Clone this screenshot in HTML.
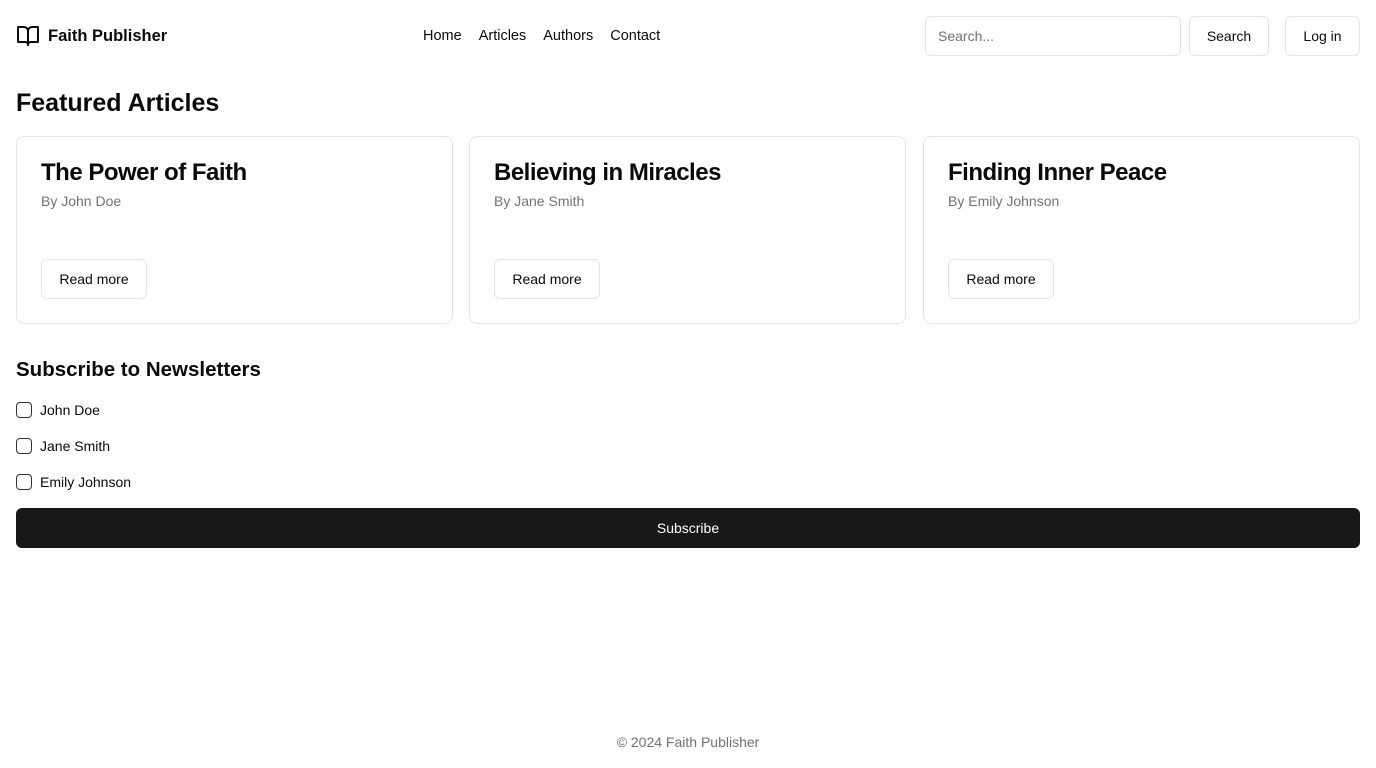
<!DOCTYPE html>
<html><head><meta charset="utf-8"><style>
*{box-sizing:border-box;margin:0;padding:0}
body{width:1376px;height:768px;position:relative;font-family:"Liberation Sans",sans-serif;color:#0a0a0a;background:#fff;overflow:hidden}
.abs{position:absolute}
.btn{position:absolute;border:1px solid #e4e4e7;border-radius:6px;background:#fff;font-size:14px;display:flex;align-items:center;justify-content:center;color:#0a0a0a}
.card{position:absolute;top:136px;width:437px;height:188px;border:1px solid #e4e4e7;border-radius:8px}
.card h3{position:absolute;left:24px;top:22px;font-size:24px;font-weight:600;letter-spacing:-0.5px}
.card p{position:absolute;left:24px;top:56px;font-size:14px;color:#71717a}
.card .btn{left:24px;top:122px;width:106px;height:40px}
.cb{position:absolute;left:16px;width:16px;height:16px;border:1.5px solid #333;border-radius:4px}
.lbl{position:absolute;left:40px;font-size:14px}
</style></head><body>
<svg class="abs" style="left:16px;top:24px" width="24" height="24" viewBox="0 0 24 24" fill="none" stroke="#0a0a0a" stroke-width="2" stroke-linecap="round" stroke-linejoin="round"><path d="M2 3h6a4 4 0 0 1 4 4v14a3 3 0 0 0-3-3H2z"/><path d="M22 3h-6a4 4 0 0 0-4 4v14a3 3 0 0 1 3-3h7z"/></svg>
<div class="abs" style="left:48px;top:27px;font-size:16.5px;font-weight:700">Faith Publisher</div>
<div class="abs" style="left:423px;top:28px;font-size:14.5px"><span>Home</span><span style="margin-left:17px">Articles</span><span style="margin-left:17px">Authors</span><span style="margin-left:17px">Contact</span></div>
<div class="btn" style="left:925px;top:16px;width:256px;height:40px;justify-content:flex-start;padding-left:12px;color:#71717a">Search...</div>
<div class="btn" style="left:1189px;top:16px;width:80px;height:40px">Search</div>
<div class="btn" style="left:1285px;top:16px;width:75px;height:40px">Log in</div>
<div class="abs" style="left:16px;top:89px;font-size:25px;font-weight:700">Featured Articles</div>
<div class="card" style="left:16px"><h3>The Power of Faith</h3><p>By John Doe</p><div class="btn">Read more</div></div>
<div class="card" style="left:469px"><h3>Believing in Miracles</h3><p>By Jane Smith</p><div class="btn">Read more</div></div>
<div class="card" style="left:923px"><h3>Finding Inner Peace</h3><p>By Emily Johnson</p><div class="btn">Read more</div></div>
<div class="abs" style="left:16px;top:358px;font-size:20.5px;font-weight:700">Subscribe to Newsletters</div>
<div class="cb" style="top:402px"></div><div class="lbl" style="top:402px">John Doe</div>
<div class="cb" style="top:438px"></div><div class="lbl" style="top:438px">Jane Smith</div>
<div class="cb" style="top:474px"></div><div class="lbl" style="top:474px">Emily Johnson</div>
<div class="abs" style="left:16px;top:508px;width:1344px;height:40px;background:#18181b;border-radius:6px;color:#fff;font-size:14px;display:flex;align-items:center;justify-content:center">Subscribe</div>
<div class="abs" style="left:0;width:1376px;top:734px;text-align:center;font-size:14px;color:#71717a">© 2024 Faith Publisher</div>
</body></html>
